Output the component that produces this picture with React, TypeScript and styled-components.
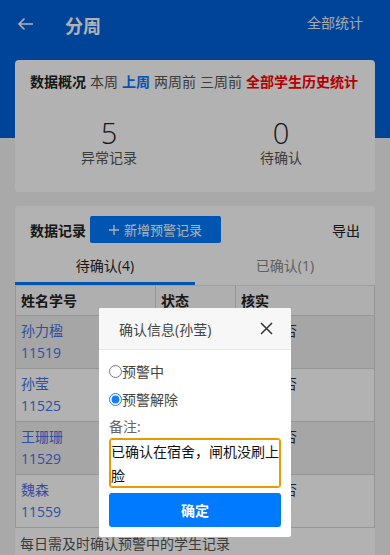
import React, { useState } from "react";
import styled, { createGlobalStyle } from "styled-components";

const GlobalStyle = createGlobalStyle`
  body {
    margin: 0;
    background: #f2f2f4;
    font-family: "Open Sans", "Noto Sans CJK SC", sans-serif;
    font-size: 14px;
    color: #333;
  }
`;

const Page = styled.div`
  min-height: 700px;
  background: linear-gradient(#0062dc 0 138px, #f2f2f4 138px);
  padding-bottom: 20px;
`;

const TopBar = styled.div`
  height: 50px;
  display: flex;
  align-items: center;
  padding: 0 27px 0 17px;
  color: #fff;
`;

const BackIcon = styled.svg`
  width: 17px;
  height: 14px;
  margin-top: -2px;
`;

const PageTitle = styled.div`
  margin-left: 31px;
  font-size: 18px;
  font-weight: 700;
  flex: 1;
`;

const TopLink = styled.div`
  font-size: 14px;
  opacity: 0.92;
  margin-top: -6px;
`;

const Card = styled.div<{ $top: number }>`
  margin: ${({ $top }) => $top}px 15px 0;
  background: #fff;
  border-radius: 4px;
`;

const Periods = styled.div`
  display: flex;
  gap: 4px;
  padding: 12px 15px 0;
  line-height: 20px;
  white-space: nowrap;
`;

const Period = styled.span<{ $tone?: "title" | "active" | "all" }>`
  color: ${({ $tone }) =>
    $tone === "active" ? "#007aff" : $tone === "all" ? "#ff0000" : $tone === "title" ? "#222" : "#555"};
  font-weight: ${({ $tone }) => ($tone ? 700 : 400)};
`;

const Stats = styled.div`
  display: grid;
  grid-template-columns: 1fr 1fr;
  padding: 26px 8px 24px;
`;

const Stat = styled.div`
  display: flex;
  flex-direction: column;
  align-items: center;
`;

const StatNum = styled.div`
  font-size: 29px;
  font-weight: 300;
  line-height: 30px;
  color: #222;
`;

const StatLabel = styled.div`
  line-height: 20px;
  color: #555;
`;

const RecordHead = styled.div`
  display: flex;
  align-items: center;
  padding: 10px 15px 0 15px;
`;

const RecordTitle = styled.div`
  font-weight: 700;
  color: #222;
  margin-right: 4px;
`;

const AddButton = styled.button`
  width: 131px;
  height: 27px;
  border: none;
  border-radius: 2px;
  background: #007aff;
  color: #fff;
  font: inherit;
  font-size: 13px;
  display: flex;
  align-items: center;
  justify-content: center;
  gap: 5px;
  padding: 0;
`;

const Export = styled.div`
  margin-left: auto;
  color: #222;
`;

const Tabs = styled.div`
  display: grid;
  grid-template-columns: 1fr 1fr;
  margin-top: 5px;
  border-bottom: 1px solid #e2e2e2;
`;

const Tab = styled.div<{ $active?: boolean }>`
  height: 34px;
  display: flex;
  align-items: center;
  justify-content: center;
  color: ${({ $active }) => ($active ? "#222" : "#888")};
  border-bottom: 3px solid ${({ $active }) => ($active ? "#007aff" : "transparent")};
`;

const Table = styled.table`
  width: 100%;
  border-collapse: collapse;
  table-layout: fixed;
`;

const HeadCell = styled.th<{ $w?: number }>`
  box-sizing: border-box;
  width: ${({ $w }) => ($w ? `${$w}px` : "auto")};
  height: 29px;
  padding: 0 5px;
  text-align: left;
  font-weight: 700;
  color: #222;
  background: #fbfbfb;
  border: 1px solid #d6d6d6;
  border-top: none;
`;

const Row = styled.tr<{ $odd: boolean }>`
  background: ${({ $odd }) => ($odd ? "#eeeeee" : "#fff")};
`;

const Cell = styled.td`
  padding: 4px 5px;
  line-height: 22px;
  vertical-align: top;
  border: 1px solid #d6d6d6;
  color: #333;
  white-space: nowrap;
  overflow: hidden;
`;

const Name = styled.div`
  color: #4672e8;
`;

const Footer = styled.div`
  padding: 6px 5px;
  line-height: 20px;
  color: #555;
`;

const Mask = styled.div`
  position: fixed;
  inset: 0;
  background: rgba(0, 0, 0, 0.3);
`;

const Modal = styled.div`
  position: fixed;
  top: 308px;
  left: 50%;
  transform: translateX(-50%);
  width: 192px;
  background: #fff;
  border-radius: 2px;
  overflow: hidden;
`;

const ModalHead = styled.div`
  height: 41px;
  display: flex;
  align-items: center;
  padding: 0 18px 0 20px;
  background: #f7f7f7;
  border-bottom: 1px solid #e8e8e8;
  color: #444;
`;

const ModalTitle = styled.div`
  flex: 1;
`;

const ModalBody = styled.div`
  padding: 11px 10px 10px;
`;

const Choice = styled.label`
  display: flex;
  align-items: center;
  height: 20px;
  margin-bottom: 8px;
  color: #444;

  input {
    margin: 0;
    width: 13px;
    height: 13px;
    accent-color: #1a7cf5;
  }
`;

const NoteLabel = styled.div`
  color: #666;
  line-height: 20px;
  margin-top: 1px;
`;

const Note = styled.textarea`
  display: block;
  box-sizing: border-box;
  width: 172px;
  height: 50px;
  margin-top: 1px;
  padding: 1px 1px;
  border: 1px solid #e69b00;
  box-shadow: inset 0 0 0 1px #e69b00;
  border-radius: 3px;
  font: inherit;
  font-size: 14px;
  line-height: 24px;
  color: #111;
  resize: none;
  overflow: hidden;
  outline: none;
`;

const Confirm = styled.button`
  display: block;
  width: 172px;
  height: 34px;
  margin-top: 5px;
  border: none;
  border-radius: 3px;
  background: #007aff;
  color: #fff;
  font: inherit;
  font-weight: 700;
`;

const records = [
  { name: "孙力楹", id: "11519" },
  { name: "孙莹", id: "11525" },
  { name: "王珊珊", id: "11529" },
  { name: "魏森", id: "11559" },
];

export default function App() {
  const [choice, setChoice] = useState("lifted");

  return (
    <>
      <GlobalStyle />
      <Page>
        <TopBar>
          <BackIcon viewBox="0 0 17 14">
            <path d="M16 7H2M7.5 1.5 2 7l5.5 5.5" fill="none" stroke="#fff" strokeWidth="1.6" />
          </BackIcon>
          <PageTitle>分周</PageTitle>
          <TopLink>全部统计</TopLink>
        </TopBar>

        <Card $top={10}>
          <Periods>
            <Period $tone="title">数据概况</Period>
            <Period>本周</Period>
            <Period $tone="active">上周</Period>
            <Period>两周前</Period>
            <Period>三周前</Period>
            <Period $tone="all">全部学生历史统计</Period>
          </Periods>
          <Stats>
            <Stat>
              <StatNum>5</StatNum>
              <StatLabel>异常记录</StatLabel>
            </Stat>
            <Stat>
              <StatNum>0</StatNum>
              <StatLabel>待确认</StatLabel>
            </Stat>
          </Stats>
        </Card>

        <Card $top={14}>
          <RecordHead>
            <RecordTitle>数据记录</RecordTitle>
            <AddButton>
              <svg width="10" height="10" viewBox="0 0 10 10">
                <path d="M5 0v10M0 5h10" stroke="#fff" strokeWidth="1.3" />
              </svg>
              <span>新增预警记录</span>
            </AddButton>
            <Export>导出</Export>
          </RecordHead>
          <Tabs>
            <Tab $active>待确认(4)</Tab>
            <Tab>已确认(1)</Tab>
          </Tabs>
          <Table>
            <thead>
              <tr>
                <HeadCell $w={140}>姓名学号</HeadCell>
                <HeadCell $w={80}>状态</HeadCell>
                <HeadCell>核实</HeadCell>
              </tr>
            </thead>
            <tbody>
              {records.map((r, i) => (
                <Row key={r.id} $odd={i % 2 === 0}>
                  <Cell>
                    <Name>{r.name}</Name>
                    <Name>{r.id}</Name>
                  </Cell>
                  <Cell>预警中</Cell>
                  <Cell>在校：否</Cell>
                </Row>
              ))}
            </tbody>
          </Table>
          <Footer>每日需及时确认预警中的学生记录</Footer>
        </Card>
      </Page>

      <Mask />
      <Modal>
        <ModalHead>
          <ModalTitle>确认信息(孙莹)</ModalTitle>
          <svg width="13" height="13" viewBox="0 0 13 13">
            <path d="M1 1l11 11M12 1 1 12" stroke="#333" strokeWidth="1.5" />
          </svg>
        </ModalHead>
        <ModalBody>
          <Choice>
            <input type="radio" checked={choice === "warning"} onChange={() => setChoice("warning")} />
            预警中
          </Choice>
          <Choice>
            <input type="radio" checked={choice === "lifted"} onChange={() => setChoice("lifted")} />
            预警解除
          </Choice>
          <NoteLabel>备注:</NoteLabel>
          <Note readOnly value="已确认在宿舍，闸机没刷上脸" />
          <Confirm>确定</Confirm>
        </ModalBody>
      </Modal>
    </>
  );
}
